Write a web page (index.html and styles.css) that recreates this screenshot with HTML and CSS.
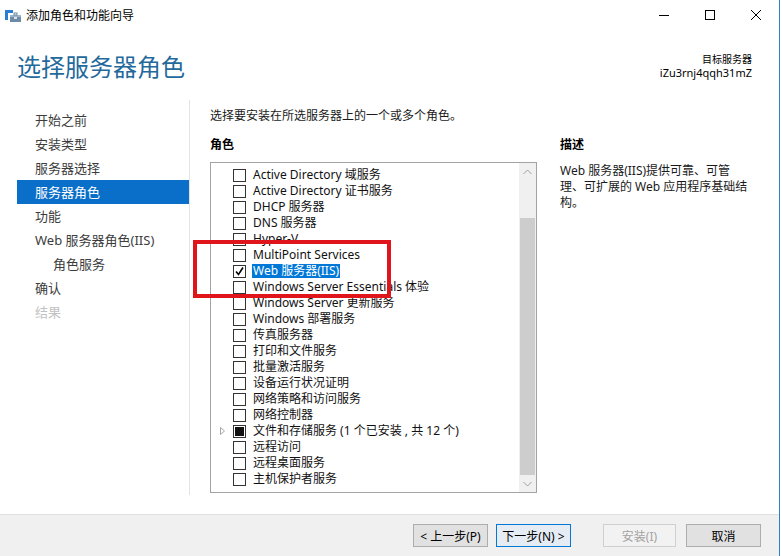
FILE: index.html
```html
<!DOCTYPE html>
<html lang="zh-CN">
<head>
<meta charset="utf-8">
<title>添加角色和功能向导</title>
<link rel="stylesheet" href="styles.css">
</head>
<body>
<div class="window">
  <div class="titlebar">
    <div class="title">
      <svg class="app-icon" width="16" height="12" viewBox="0 0 16 12">
        <rect x="0" y="0" width="8" height="3" fill="#2b7cd3"/>
        <rect x="0" y="0" width="3" height="10" fill="#2b7cd3"/>
        <rect x="5" y="5" width="11" height="7" fill="#6d8aa6"/>
        <rect x="5" y="5" width="11" height="2" fill="#9fb4c8"/>
        <rect x="9" y="3" width="3" height="2" fill="none" stroke="#6d8aa6" stroke-width="1"/>
        <rect x="9" y="7" width="3" height="2" fill="#d8e2ec"/>
      </svg>
      <span>添加角色和功能向导</span>
    </div>
    <div class="controls">
      <div class="ctl"><svg width="10" height="10" viewBox="0 0 10 10"><line x1="0" y1="5.5" x2="10" y2="5.5" stroke="#000" stroke-width="1"/></svg></div>
      <div class="ctl"><svg width="10" height="10" viewBox="0 0 10 10"><rect x="0.5" y="0.5" width="9" height="9" fill="none" stroke="#000" stroke-width="1"/></svg></div>
      <div class="ctl"><svg width="10" height="10" viewBox="0 0 10 10"><path d="M0 0 L10 10 M10 0 L0 10" stroke="#000" stroke-width="1"/></svg></div>
    </div>
  </div>

  <div class="header">
    <h1 class="page-title">选择服务器角色</h1>
    <div class="target">
      <div class="target-label">目标服务器</div>
      <div class="target-name">iZu3rnj4qqh31mZ</div>
    </div>
  </div>

  <div class="body">
    <nav class="nav">
      <div class="nav-item">开始之前</div>
      <div class="nav-item">安装类型</div>
      <div class="nav-item">服务器选择</div>
      <div class="nav-item active">服务器角色</div>
      <div class="nav-item">功能</div>
      <div class="nav-item">Web 服务器角色(IIS)</div>
      <div class="nav-item sub">角色服务</div>
      <div class="nav-item">确认</div>
      <div class="nav-item disabled">结果</div>
    </nav>

    <main class="main">
      <p class="intro">选择要安装在所选服务器上的一个或多个角色。</p>
      <div class="cols">
        <div class="roles">
          <h2 class="section-title">角色</h2>
          <div class="listbox">
            <ul class="items">
              <li class="row"><span class="exp"></span><span class="cb"></span><span class="label">Active Directory 域服务</span></li>
              <li class="row"><span class="exp"></span><span class="cb"></span><span class="label">Active Directory 证书服务</span></li>
              <li class="row"><span class="exp"></span><span class="cb"></span><span class="label">DHCP 服务器</span></li>
              <li class="row"><span class="exp"></span><span class="cb"></span><span class="label">DNS 服务器</span></li>
              <li class="row"><span class="exp"></span><span class="cb"></span><span class="label">Hyper-V</span></li>
              <li class="row"><span class="exp"></span><span class="cb"></span><span class="label">MultiPoint Services</span></li>
              <li class="row"><span class="exp"></span><span class="cb checked"><svg width="11" height="11" viewBox="0 0 11 11"><path d="M2 5.5 L4.5 8.5 L9 1.5" fill="none" stroke="#000" stroke-width="1.6"/></svg></span><span class="label selected">Web 服务器(IIS)</span></li>
              <li class="row"><span class="exp"></span><span class="cb"></span><span class="label">Windows Server Essentials 体验</span></li>
              <li class="row"><span class="exp"></span><span class="cb"></span><span class="label">Windows Server 更新服务</span></li>
              <li class="row"><span class="exp"></span><span class="cb"></span><span class="label">Windows 部署服务</span></li>
              <li class="row"><span class="exp"></span><span class="cb"></span><span class="label">传真服务器</span></li>
              <li class="row"><span class="exp"></span><span class="cb"></span><span class="label">打印和文件服务</span></li>
              <li class="row"><span class="exp"></span><span class="cb"></span><span class="label">批量激活服务</span></li>
              <li class="row"><span class="exp"></span><span class="cb"></span><span class="label">设备运行状况证明</span></li>
              <li class="row"><span class="exp"></span><span class="cb"></span><span class="label">网络策略和访问服务</span></li>
              <li class="row"><span class="exp"></span><span class="cb"></span><span class="label">网络控制器</span></li>
              <li class="row"><span class="exp"><svg width="5" height="8" viewBox="0 0 5 8"><path d="M0.5 0.5 L4.5 4 L0.5 7.5 Z" fill="none" stroke="#a6a6a6" stroke-width="1"/></svg></span><span class="cb partial"><span class="fill"></span></span><span class="label">文件和存储服务 (1 个已安装 , 共 12 个)</span></li>
              <li class="row"><span class="exp"></span><span class="cb"></span><span class="label">远程访问</span></li>
              <li class="row"><span class="exp"></span><span class="cb"></span><span class="label">远程桌面服务</span></li>
              <li class="row"><span class="exp"></span><span class="cb"></span><span class="label">主机保护者服务</span></li>
            </ul>
            <div class="scrollbar">
              <div class="sb-arrow"><svg width="9" height="6" viewBox="0 0 9 6"><path d="M0.5 5 L4.5 1 L8.5 5" fill="none" stroke="#a0a0a0" stroke-width="1"/></svg></div>
              <div class="sb-track"><div class="sb-thumb"></div></div>
              <div class="sb-arrow"><svg width="9" height="6" viewBox="0 0 9 6"><path d="M0.5 1 L4.5 5 L8.5 1" fill="none" stroke="#a0a0a0" stroke-width="1"/></svg></div>
            </div>
          </div>
        </div>
        <div class="desc">
          <h2 class="section-title">描述</h2>
          <p class="desc-text">Web 服务器(IIS)提供可靠、可管<br>理、可扩展的 Web 应用程序基础结<br>构。</p>
        </div>
      </div>
    </main>
  </div>

  <div class="footer">
    <button class="btn">&lt; 上一步(P)</button>
    <button class="btn default">下一步(N) &gt;</button>
    <button class="btn disabled">安装(I)</button>
    <button class="btn">取消</button>
  </div>

  <div class="callout"></div>
</div>
</body>
</html>
```

FILE: styles.css
```css
* { box-sizing: border-box; }
html, body { margin: 0; padding: 0; }
body {
  width: 782px;
  height: 556px;
  background: #ffffff;
  font-family: "Noto Sans", "Noto Sans CJK SC", sans-serif;
  font-size: 12px;
  color: #000;
  overflow: hidden;
}
.window {
  position: relative;
  width: 780px;
  height: 556px;
  border-right: 1px solid #2f7fd0;
  display: flex;
  flex-direction: column;
  background: #fff;
}

/* title bar */
.titlebar {
  height: 30px;
  display: flex;
  justify-content: space-between;
  align-items: stretch;
}
.title {
  display: flex;
  align-items: center;
  padding-left: 5px;
  font-size: 12px;
  color: #000;
}
.app-icon { margin-right: 5px; margin-top: 2px; }
.controls { display: flex; }
.ctl {
  width: 46px;
  height: 30px;
  display: flex;
  align-items: center;
  justify-content: center;
}
.ctl svg { display: block; }

/* header */
.header {
  height: 70px;
  display: flex;
  justify-content: space-between;
  align-items: flex-start;
  padding: 0 27px 0 17px;
}
.page-title {
  margin: 20px 0 0 0;
  font-size: 24px;
  line-height: 32px;
  font-weight: normal;
  color: #24699c;
  font-family: "Noto Sans CJK SC", sans-serif;
}
.target {
  margin-top: 23px;
  text-align: right;
  color: #000;
}
.target-label { font-size: 10px; line-height: 13px; }
.target-name { font-size: 11px; line-height: 13px; }

/* body */
.body {
  height: 414px;
  display: flex;
  align-items: flex-start;
}
.nav {
  width: 190px;
  height: 395px;
  padding: 8px 0 0 17px;
  border-right: 1px solid #e3e3e3;
  flex-shrink: 0;
}
.nav-item {
  height: 24px;
  line-height: 24px;
  padding-left: 18px;
  font-size: 13px;
  color: #3c3c3c;
  white-space: nowrap;
}
.nav-item.sub { padding-left: 36px; }
.nav-item.active { background: #0a6fc8; color: #fff; }
.nav-item.disabled { color: #c2c2c2; }

.main {
  padding-left: 20px;
  flex: 1;
}
.intro {
  margin: 8px 0 0 0;
  line-height: 16px;
  color: #1a1a1a;
}
.cols { display: flex; margin-top: 13px; }
.roles { width: 327px; flex-shrink: 0; }
.section-title {
  margin: 0;
  font-size: 12px;
  line-height: 16px;
  font-weight: bold;
}
.listbox {
  margin-top: 9px;
  width: 327px;
  height: 331px;
  border: 1px solid #a3a3a3;
  display: flex;
}
.items {
  list-style: none;
  margin: 0;
  padding: 4px 0 0 0;
  flex: 1;
}
.row {
  height: 16px;
  display: flex;
  align-items: center;
  white-space: nowrap;
}
.exp {
  width: 22px;
  padding-left: 9px;
  display: flex;
  align-items: center;
}
.exp svg { display: block; }
.cb {
  width: 13px;
  height: 13px;
  border: 1px solid #333;
  background: #fff;
  margin-right: 7px;
  flex-shrink: 0;
  display: flex;
  align-items: center;
  justify-content: center;
}
.cb svg { display: block; }
.cb.partial .fill {
  width: 9px;
  height: 9px;
  background: #111;
}
.label { line-height: 16px; color: #111; }
.label.selected {
  background: #0078d7;
  color: #fff;
  padding: 0 1px;
  margin-left: -1px;
  line-height: 14px;
}

.scrollbar {
  width: 17px;
  display: flex;
  flex-direction: column;
  background: #f0f0f0;
}
.sb-arrow {
  height: 17px;
  display: flex;
  align-items: center;
  justify-content: center;
}
.sb-arrow svg { display: block; }
.sb-track {
  flex: 1;
  display: flex;
  flex-direction: column;
  justify-content: flex-end;
  padding: 0 1px;
}
.sb-thumb {
  height: 257px;
  background: #cdcdcd;
}

.desc { margin-left: 23px; }
.desc-text {
  margin: 10px 0 0 0;
  line-height: 16px;
  color: #1a1a1a;
  white-space: nowrap;
}

/* footer */
.footer {
  height: 42px;
  background: #f0f0f0;
  border-top: 1px solid #dfdfdf;
  display: flex;
  justify-content: flex-end;
  align-items: flex-start;
  padding: 9px 18px 0 0;
}
.btn {
  width: 75px;
  height: 23px;
  font-family: "Noto Sans", "Noto Sans CJK SC", sans-serif;
  font-size: 12px;
  color: #000;
  background: #e1e1e1;
  border: 1px solid #adadad;
  padding: 0;
  margin: 0;
}
.btn + .btn { margin-left: 8px; }
.btn.default { border-color: #0078d7; background: #e5ecf3; }
.btn.disabled { margin-left: 32px; color: #a3a3a3; background: #f2f2f2; border-color: #cfcfcf; width: 73px; }
.btn.disabled + .btn { margin-left: 10px; }

/* red callout frame drawn over the list */
.callout {
  position: absolute;
  left: 193px;
  top: 240px;
  width: 198px;
  height: 58px;
  border: 4px solid #e0151b;
}
```
